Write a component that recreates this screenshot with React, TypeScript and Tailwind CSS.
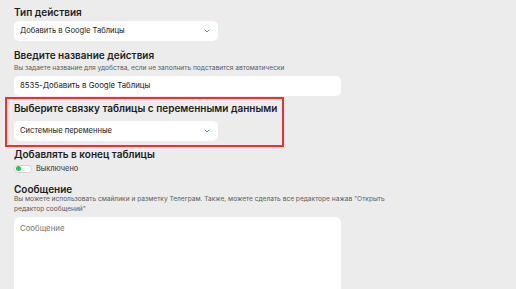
import { ChevronDown } from "lucide-react";

const Heading = ({ text, className = "" }: { text: string; className?: string }): JSX.Element => {
    return (
        <h2 className={`text-[10px] leading-[16px] font-semibold text-[#1d1d1d] ${className}`}>{text}</h2>
    );
};

const Hint = ({ text, className = "" }: { text: string; className?: string }): JSX.Element => {
    return (
        <p className={`text-[6.6px] leading-[9.5px] text-[#5b5b5b] ${className}`}>{text}</p>
    );
};

const Select = ({ value, className = "" }: { value: string; className?: string }): JSX.Element => {
    return (
        <div className={`flex h-[20px] w-[204px] items-center justify-between rounded-[5px] bg-white pl-[6px] pr-[7px] ${className}`}>
            <span className="text-[7.6px] text-[#222]">{value}</span>
            <ChevronDown className="h-[8px] w-[8px] text-[#4a8fe7]" strokeWidth={3} />
        </div>
    );
};

const Toggle = (): JSX.Element => {
    return (
        <div className="flex items-center gap-[4px]">
            <div className="flex h-[8px] w-[18px] items-center rounded-full border border-[#d4d4d4] bg-white px-[1px]">
                <div className="h-[5px] w-[5px] rounded-full bg-[#22c55e]" />
            </div>
            <span className="text-[7.4px] text-[#333]">Выключено</span>
        </div>
    );
};

export default function App(): JSX.Element {
    return (
        <div className="min-h-screen overflow-hidden bg-[#ececec] pl-[14px] pr-[4px] pt-[4px] font-['Inter',sans-serif]">
            <Heading text="Тип действия" />
            <Select value="Добавить в Google Таблицы" className="mt-[1px]" />

            <Heading text="Введите название действия" className="mt-[6px]" />
            <Hint text="Вы задаете название для удобства, если не заполнить подставится автоматически" className="leading-[10px]" />
            <div className="mt-[3px] flex h-[20px] w-[327px] items-center rounded-[5px] bg-white px-[6px]">
                <span className="text-[7.8px] text-[#222]">8535-Добавить в Google Таблицы</span>
            </div>

            <div className="ml-[-9px] mt-[1px] w-[279px] border-2 border-[#f0302a] pb-[4px] pl-[7px] pt-[1px]">
                <Heading text="Выберите связку таблицы с переменными данными" />
                <Select value="Системные переменные" className="mt-[5px]" />
            </div>

            <Heading text="Добавлять в конец таблицы" className="mt-[-1px]" />
            <div className="mt-[1px] h-[14px]">
                <Toggle />
            </div>

            <Heading text="Сообщение" className="mt-[4px]" />
            <Hint text='Вы можете использовать смайлики и разметку Телеграм. Также, можете сделать все редакторе нажав "Открыть редактор сообщений"' className="mt-[-2px] max-w-[375px]" />
            <div className="mt-[3px] h-[120px] w-[327px] rounded-[6px] bg-white px-[6px] pt-[6px]">
                <p className="text-[7.8px] leading-[10px] text-[#777]">Сообщение</p>
            </div>
        </div>
    );
}
